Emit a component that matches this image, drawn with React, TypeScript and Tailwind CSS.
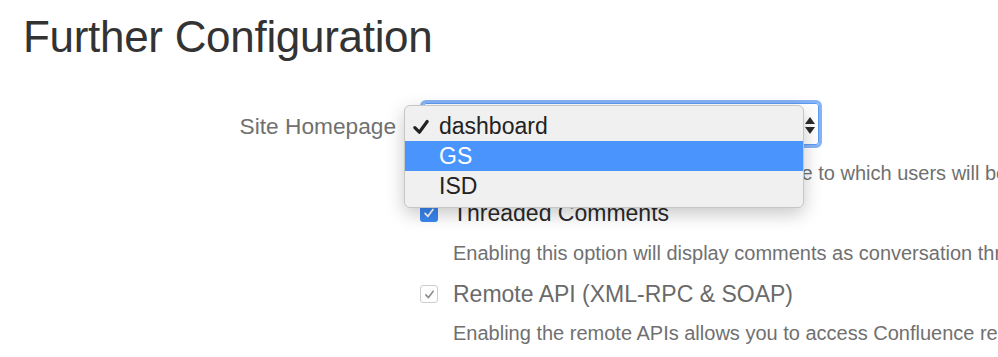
import { type JSX } from "react";

const options = ["dashboard", "GS", "ISD"];

function Check({ className, width = 2 }: { className: string; width?: number }): JSX.Element {
  return (
    <svg viewBox="0 0 16 16" className={className} fill="none">
      <path d="M3.5 8.5 L6.8 11.8 L12.5 4" stroke="currentColor" strokeWidth={width} strokeLinecap="round" strokeLinejoin="round" />
    </svg>
  );
}

export default function App(): JSX.Element {
  return (
    <div className="w-[998px] h-[357px] overflow-hidden bg-white font-['Liberation_Sans',Arial,sans-serif]">
      <h1 className="pl-[23px] pt-[9px] text-[44px] leading-[56px] text-[#333333] font-normal tracking-[-0.3px]">
        Further Configuration
      </h1>

      <div className="mt-[35px] flex items-start">
        {/* Label column */}
        <div className="w-[396px] shrink-0 pt-[13px] text-right text-[22.7px] leading-[26px] text-[#707070]">
          Site Homepage
        </div>

        {/* Field column */}
        <div className="ml-[24px] flex-1 min-w-0">
          <div className="relative w-[402px] h-[48px] rounded-[6px] border-[3px] border-[#86b3f6] bg-white">
            <div className="absolute inset-0 rounded-[3px] border border-[#5c9cf5]" />
            <div className="absolute right-[4px] top-[14px] flex flex-col gap-[3px]">
              <span className="block w-0 h-0 border-x-[5px] border-x-transparent border-b-[7px] border-b-[#2b2b2b]" />
              <span className="block w-0 h-0 border-x-[5px] border-x-transparent border-t-[7px] border-t-[#2b2b2b]" />
            </div>

            {/* Open menu */}
            <div className="absolute left-[-19px] top-[2px] z-10 w-[400px] rounded-[6px] border border-[#c6c6c6] bg-[#f0f0f0] pt-[5px] pb-[6px] shadow-[0_6px_18px_rgba(0,0,0,0.22)]">
              {options.map((o, i) => (
                <div
                  key={o}
                  className={`relative h-[30px] pl-[34px] text-[23px] leading-[30px] ${
                    i === 1 ? "bg-[#4a95fd] text-white" : "text-[#222222]"
                  }`}
                >
                  {i === 0 && (
                    <Check width={2.3} className="absolute left-[5px] top-[5px] w-[22px] h-[22px] text-[#222222]" />
                  )}
                  {o}
                </div>
              ))}
            </div>
          </div>

          <p className="mt-[13px] pl-[8px] whitespace-nowrap text-[20px] leading-[24px] text-[#707070]">
            Choose the dashboard or space homepage to which users will be redirected after login.
          </p>

          <div className="mt-[14px] flex items-start">
            <span className="mt-[5px] flex w-[18px] h-[18px] items-center justify-center rounded-[3px] bg-[#3a87f2]">
              <Check className="w-[14px] h-[14px] text-white" />
            </span>
            <span className="ml-[15px] whitespace-nowrap text-[23px] leading-[28px] text-[#2a2a2a]">
              Threaded Comments
            </span>
          </div>
          <p className="mt-[14px] pl-[33px] whitespace-nowrap text-[20px] leading-[24px] text-[#707070]">
            Enabling this option will display comments as conversation threads.
          </p>

          <div className="mt-[15px] flex items-start">
            <span className="mt-[5px] flex w-[18px] h-[18px] items-center justify-center rounded-[3px] border border-[#cdcdcd] bg-white">
              <Check className="w-[13px] h-[13px] text-[#8e8e8e]" />
            </span>
            <span className="ml-[15px] whitespace-nowrap text-[23px] leading-[28px] text-[#6a6a6a]">
              Remote API (XML-RPC &amp; SOAP)
            </span>
          </div>
          <p className="mt-[13px] pl-[33px] whitespace-nowrap text-[20px] leading-[24px] text-[#707070]">
            Enabling the remote APIs allows you to access Confluence remotely.
          </p>
        </div>
      </div>
    </div>
  );
}
